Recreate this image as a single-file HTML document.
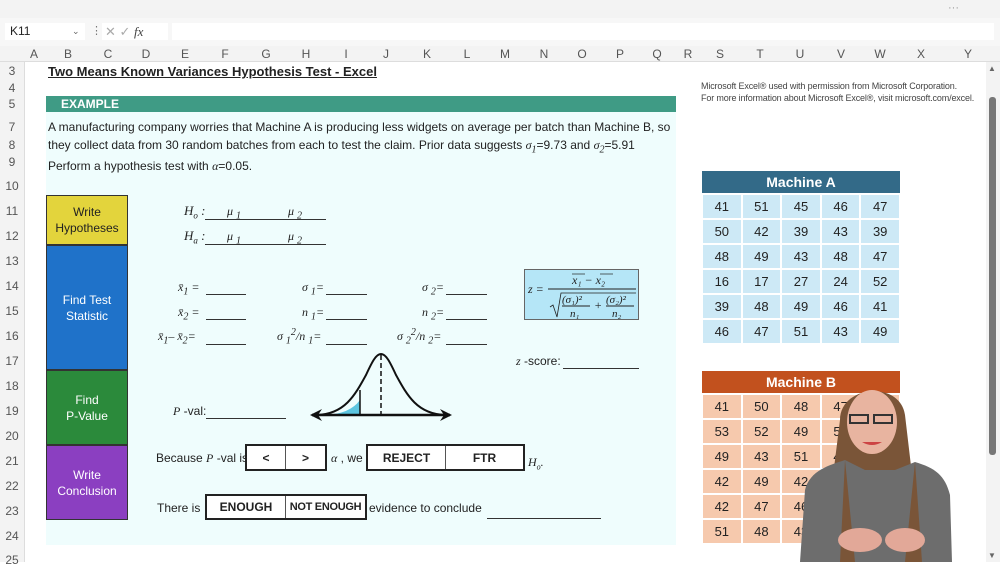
<!DOCTYPE html><html><head><style>
*{margin:0;padding:0;box-sizing:border-box}
body{width:1000px;height:562px;overflow:hidden;background:#fff;font-family:"Liberation Sans",sans-serif;position:relative;color:#222}
.a{position:absolute}
.rn{position:absolute;left:4px;width:16px;text-align:center;font-size:12px;color:#555}
.cl{position:absolute;top:47px;font-size:12px;color:#555;transform:translateX(-50%)}
.m{font-family:"Liberation Serif",serif;font-style:italic}
.ln{position:absolute;border-bottom:1px solid #333}
.box{position:absolute;color:#fff;font-size:12px;text-align:center;display:flex;align-items:center;justify-content:center;line-height:16px;border:1px solid #333}
.tbl{position:absolute;left:701px;width:200px;border-collapse:collapse;table-layout:fixed}
.tbl td{width:40px;height:25px;text-align:center;font-size:13px;border:2px solid #fff;color:#222;padding:0}
.tbl th{height:23px;color:#fff;font-size:14px;font-weight:bold}
.bx{position:absolute;border:2px solid #222;display:flex;background:#fff}
.bx div{display:flex;align-items:center;justify-content:center;font-weight:bold;font-size:12px;border-right:1px solid #555;white-space:nowrap}
.bx div:last-child{border-right:none}
</style></head><body>
<div class="a" style="left:0;top:0;width:1000px;height:18px;background:#f3f3f3"></div>
<div class="a" style="left:948px;top:2px;font-size:11px;color:#999">···</div>
<div class="a" style="left:0;top:18px;width:1000px;height:28px;background:#f7f7f7"></div>
<div class="a" style="left:5px;top:23px;width:80px;height:17px;background:#fff;font-size:12px;padding-left:5px;line-height:17px">K11<span style="position:absolute;left:67px;color:#666;font-size:9px">⌄</span></div>
<div class="a" style="left:91px;top:24px;font-size:11px;color:#777">⋮</div>
<div class="a" style="left:102px;top:23px;width:66px;height:17px;background:#fff;font-size:13px;color:#aaa;line-height:17px;padding-left:3px">✕ ✓ <span class="m" style="color:#444">fx</span></div>
<div class="a" style="left:172px;top:23px;width:822px;height:17px;background:#fff"></div>
<div class="a" style="left:0;top:46px;width:1000px;height:16px;background:#f3f3f3;border-bottom:1px solid #ddd"></div>
<div class="cl" style="left:34px">A</div><div class="cl" style="left:68px">B</div><div class="cl" style="left:108px">C</div><div class="cl" style="left:146px">D</div><div class="cl" style="left:185px">E</div><div class="cl" style="left:225px">F</div><div class="cl" style="left:266px">G</div><div class="cl" style="left:306px">H</div><div class="cl" style="left:346px">I</div><div class="cl" style="left:386px">J</div><div class="cl" style="left:427px">K</div><div class="cl" style="left:467px">L</div><div class="cl" style="left:505px">M</div><div class="cl" style="left:544px">N</div><div class="cl" style="left:582px">O</div><div class="cl" style="left:620px">P</div><div class="cl" style="left:657px">Q</div><div class="cl" style="left:688px">R</div><div class="cl" style="left:720px">S</div><div class="cl" style="left:760px">T</div><div class="cl" style="left:800px">U</div><div class="cl" style="left:841px">V</div><div class="cl" style="left:880px">W</div><div class="cl" style="left:921px">X</div><div class="cl" style="left:968px">Y</div>
<div class="a" style="left:0;top:62px;width:25px;height:500px;background:#f3f3f3;border-right:1px solid #ddd"></div>
<div class="rn" style="top:64px">3</div><div class="rn" style="top:81px">4</div><div class="rn" style="top:97px">5</div><div class="rn" style="top:120px">7</div><div class="rn" style="top:138px">8</div><div class="rn" style="top:155px">9</div>
<div class="rn" style="top:179px">10</div><div class="rn" style="top:204px">11</div><div class="rn" style="top:229px">12</div><div class="rn" style="top:254px">13</div><div class="rn" style="top:279px">14</div><div class="rn" style="top:304px">15</div><div class="rn" style="top:329px">16</div><div class="rn" style="top:354px">17</div><div class="rn" style="top:379px">18</div><div class="rn" style="top:404px">19</div><div class="rn" style="top:429px">20</div><div class="rn" style="top:454px">21</div><div class="rn" style="top:479px">22</div><div class="rn" style="top:504px">23</div><div class="rn" style="top:529px">24</div><div class="rn" style="top:553px">25</div>
<div class="a" style="left:48px;top:64px;font-size:13px;font-weight:bold;text-decoration:underline">Two Means Known Variances Hypothesis Test - Excel</div>
<div class="a" style="left:46px;top:96px;width:630px;height:16px;background:#3f9b85;color:#fff;font-weight:bold;font-size:12px;padding-left:15px;line-height:16px">EXAMPLE</div>
<div class="a" style="left:46px;top:112px;width:630px;height:433px;background:#effdfd"></div>
<div class="a" style="left:48px;top:119px;font-size:12px;line-height:17.5px;width:630px">A manufacturing company worries that Machine A is producing less widgets on average per batch than Machine B, so they collect data from 30 random batches from each to test the claim. Prior data suggests <span class="m">σ<sub>1</sub></span>=9.73 and <span class="m">σ<sub>2</sub></span>=5.91<br>Perform a hypothesis test with <span class="m">α</span>=0.05.</div>
<div class="box" style="left:46px;top:195px;width:82px;height:50px;background:#e3d43c;color:#222">Write<br>Hypotheses</div>
<div class="box" style="left:46px;top:245px;width:82px;height:125px;background:#1f72c9">Find Test<br>Statistic</div>
<div class="box" style="left:46px;top:370px;width:82px;height:75px;background:#2b8a3b">Find<br>P-Value</div>
<div class="box" style="left:46px;top:445px;width:82px;height:75px;background:#8b3fc1">Write<br>Conclusion</div>
<div class="a m" style="left:184px;top:203px;font-size:13px">H<sub style="font-size:9px">o</sub> :</div><div class="ln" style="left:205px;top:205px;width:121px;height:15px"></div><div class="a m" style="left:227px;top:204px;font-size:12px">μ <sub>1</sub></div><div class="a m" style="left:288px;top:204px;font-size:12px">μ <sub>2</sub></div>
<div class="a m" style="left:184px;top:228px;font-size:13px">H<sub style="font-size:9px">a</sub> :</div><div class="ln" style="left:205px;top:230px;width:121px;height:15px"></div><div class="a m" style="left:227px;top:229px;font-size:12px">μ <sub>1</sub></div><div class="a m" style="left:288px;top:229px;font-size:12px">μ <sub>2</sub></div>
<div class="a m" style="left:178px;top:280px;font-size:12px">x̄<sub>1</sub> =</div><div class="ln" style="left:206px;top:281px;width:40px;height:14px"></div>
<div class="a m" style="left:178px;top:305px;font-size:12px">x̄<sub>2</sub> =</div><div class="ln" style="left:206px;top:306px;width:40px;height:14px"></div>
<div class="a m" style="left:158px;top:329px;font-size:12px">x̄<sub>1</sub>– x̄<sub>2</sub>=</div><div class="ln" style="left:206px;top:331px;width:40px;height:14px"></div>
<div class="a m" style="left:302px;top:280px;font-size:12px">σ <sub>1</sub>=</div><div class="ln" style="left:326px;top:281px;width:41px;height:14px"></div>
<div class="a m" style="left:302px;top:305px;font-size:12px">n <sub>1</sub>=</div><div class="ln" style="left:326px;top:306px;width:41px;height:14px"></div>
<div class="a m" style="left:277px;top:327px;font-size:12px">σ <sub>1</sub><sup>2</sup>/n <sub>1</sub>=</div><div class="ln" style="left:326px;top:331px;width:41px;height:14px"></div>
<div class="a m" style="left:422px;top:280px;font-size:12px">σ <sub>2</sub>=</div><div class="ln" style="left:446px;top:281px;width:41px;height:14px"></div>
<div class="a m" style="left:422px;top:305px;font-size:12px">n <sub>2</sub>=</div><div class="ln" style="left:446px;top:306px;width:41px;height:14px"></div>
<div class="a m" style="left:397px;top:327px;font-size:12px">σ <sub>2</sub><sup>2</sup>/n <sub>2</sub>=</div><div class="ln" style="left:446px;top:331px;width:41px;height:14px"></div>
<div class="a" style="left:524px;top:269px;width:115px;height:51px;background:#b5e6f7;border:1px solid #666"></div>
<svg class="a" style="left:524px;top:269px" width="115" height="51" font-family="Liberation Serif" font-style="italic" font-size="12" fill="#222">
<text x="4" y="24">z =</text><line x1="24" y1="20" x2="112" y2="20" stroke="#222"/>
<text x="48" y="15">x₁ − x₂</text><line x1="48" y1="5" x2="61" y2="5" stroke="#222" stroke-width=".7"/><line x1="76" y1="5" x2="89" y2="5" stroke="#222" stroke-width=".7"/>
<polyline points="26,38 29,36 33,48 37,24 112,24" fill="none" stroke="#222" stroke-width=".8"/>
<text x="38" y="34" font-size="11">(σ₁)²</text><line x1="38" y1="37" x2="66" y2="37" stroke="#222"/><text x="46" y="48" font-size="11">n₁</text>
<text x="70" y="40">+</text>
<text x="82" y="34" font-size="11">(σ₂)²</text><line x1="82" y1="37" x2="110" y2="37" stroke="#222"/><text x="88" y="48" font-size="11">n₂</text>
</svg>
<div class="a" style="left:516px;top:354px;font-size:12px"><span class="m">z</span> -score:</div><div class="ln" style="left:563px;top:355px;width:76px;height:14px"></div>
<div class="a" style="left:173px;top:404px;font-size:12px"><span class="m">P</span> -val:</div><div class="ln" style="left:206px;top:405px;width:80px;height:14px"></div>
<svg class="a" style="left:300px;top:350px" width="160" height="75">
<path d="M25,65 Q50,64 60,50 L60,65 Z" fill="#5cc5e0"/>
<path d="M17,65 C45,64 55,45 66,25 C72,12 76,4 81,4 C86,4 90,12 96,25 C107,45 117,64 145,65" fill="none" stroke="#111" stroke-width="2"/>
<line x1="60" y1="40" x2="60" y2="65" stroke="#111" stroke-width="1.5"/>
<line x1="81" y1="5" x2="81" y2="65" stroke="#111" stroke-width="1.5" stroke-dasharray="5,3"/>
<line x1="12" y1="65" x2="150" y2="65" stroke="#111" stroke-width="2.5"/>
<path d="M10,65 L22,59 L18,65 L22,71 Z M152,65 L140,59 L144,65 L140,71 Z" fill="#111"/>
</svg>
<div class="a" style="left:156px;top:451px;font-size:12px">Because <span class="m">P</span> -val is</div>
<div class="bx" style="left:245px;top:444px;width:82px;height:27px"><div style="width:41px">&lt;</div><div style="width:41px">&gt;</div></div>
<div class="a" style="left:331px;top:451px;font-size:12px"><span class="m">α</span> , we</div>
<div class="bx" style="left:366px;top:444px;width:159px;height:27px"><div style="width:80px">REJECT</div><div style="width:79px">FTR</div></div>
<div class="a m" style="left:528px;top:455px;font-size:12px">H<sub style="font-size:8px">o</sub>.</div>
<div class="a" style="left:157px;top:501px;font-size:12px">There is</div>
<div class="bx" style="left:205px;top:494px;width:162px;height:26px"><div style="width:81px">ENOUGH</div><div style="width:81px;font-size:11px;letter-spacing:-0.3px">NOT ENOUGH</div></div>
<div class="a" style="left:369px;top:501px;font-size:12px">evidence to conclude</div><div class="ln" style="left:487px;top:505px;width:114px;height:14px"></div>
<div class="a" style="left:701px;top:80px;font-size:9px;color:#444;line-height:12px;letter-spacing:-0.15px">Microsoft Excel® used with permission from Microsoft Corporation.<br>For more information about Microsoft Excel®, visit microsoft.com/excel.</div>
<table class="tbl" style="top:171px"><tr><th colspan="5" style="background:#336a88">Machine A</th></tr>
<tr style="background:#cde9f6"><td>41</td><td>51</td><td>45</td><td>46</td><td>47</td></tr>
<tr style="background:#cde9f6"><td>50</td><td>42</td><td>39</td><td>43</td><td>39</td></tr>
<tr style="background:#cde9f6"><td>48</td><td>49</td><td>43</td><td>48</td><td>47</td></tr>
<tr style="background:#cde9f6"><td>16</td><td>17</td><td>27</td><td>24</td><td>52</td></tr>
<tr style="background:#cde9f6"><td>39</td><td>48</td><td>49</td><td>46</td><td>41</td></tr>
<tr style="background:#cde9f6"><td>46</td><td>47</td><td>51</td><td>43</td><td>49</td></tr></table>
<table class="tbl" style="top:371px"><tr><th colspan="5" style="background:#c2511e">Machine B</th></tr>
<tr style="background:#f6c9ad"><td>41</td><td>50</td><td>48</td><td>47</td><td>45</td></tr>
<tr style="background:#f6c9ad"><td>53</td><td>52</td><td>49</td><td>50</td><td>48</td></tr>
<tr style="background:#f6c9ad"><td>49</td><td>43</td><td>51</td><td>46</td><td>44</td></tr>
<tr style="background:#f6c9ad"><td>42</td><td>49</td><td>42</td><td>45</td><td>47</td></tr>
<tr style="background:#f6c9ad"><td>42</td><td>47</td><td>46</td><td>49</td><td>50</td></tr>
<tr style="background:#f6c9ad"><td>51</td><td>48</td><td>43</td><td>47</td><td>45</td></tr></table>
<svg class="a" style="left:800px;top:380px" width="160" height="182">
<path d="M40,40 C40,5 100,0 105,35 L115,120 L120,182 L35,182 L30,120 Z" fill="#7a5538"/>
<path d="M0,182 L5,110 C10,90 30,85 45,80 L65,90 L95,90 L115,82 C135,88 145,95 150,115 L152,182 Z" fill="#6d6d6d"/>
<path d="M45,80 L55,182 L40,182 Z M115,82 L105,182 L122,182 Z" fill="#7a5538"/>
<ellipse cx="72" cy="42" rx="25" ry="32" fill="#e8b4a0"/>
<path d="M50,35 h18 v8 h-18z M74,35 h18 v8 h-18z" fill="none" stroke="#333" stroke-width="2"/>
<path d="M62,62 q10,6 20,0" fill="#c44" />
<ellipse cx="60" cy="160" rx="22" ry="12" fill="#e2a898"/><ellipse cx="105" cy="160" rx="20" ry="12" fill="#e2a898"/>
</svg>
<div class="a" style="left:986px;top:62px;width:14px;height:500px;background:#f3f3f3"></div>
<div class="a" style="left:989px;top:97px;width:7px;height:358px;background:#777;border-radius:3px"></div>
<div class="a" style="left:988px;top:551px;font-size:8px;color:#666">▼</div>
<div class="a" style="left:988px;top:64px;font-size:8px;color:#666">▲</div>
</body></html>
